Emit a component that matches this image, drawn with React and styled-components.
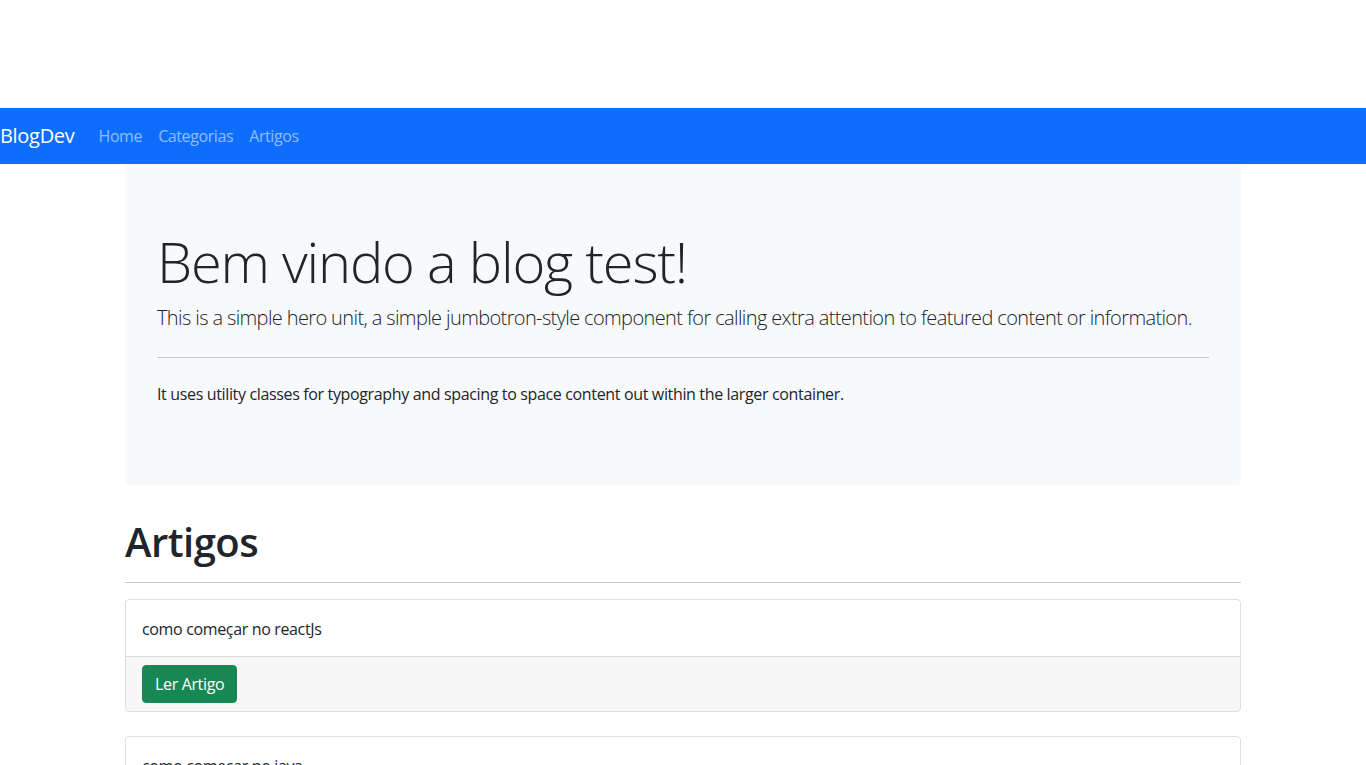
import styled, { createGlobalStyle } from "styled-components"

const GlobalStyle = createGlobalStyle`
    * { box-sizing: border-box; }
    body {
        margin: 0;
        background: #fff;
        color: #212529;
        font-family: "Open Sans", "Noto Sans", sans-serif;
        font-size: 16px;
        line-height: 1.5;
    }
`

const Page = styled.div`
    padding-top: 108px;
`

const Navbar = styled.nav`
    display: flex;
    align-items: center;
    height: 56px;
    background-color: #0d6efd;
`

const Brand = styled.a`
    color: #fff;
    font-size: 20px;
    margin-right: 16px;
    letter-spacing: -0.3px;
    text-decoration: none;
`

const NavLinks = styled.ul`
    display: flex;
    list-style: none;
    margin: 0;
    padding: 0;
`

const NavLink = styled.a`
    display: block;
    padding: 8px;
    color: rgba(255, 255, 255, 0.55);
    letter-spacing: -0.4px;
    text-decoration: none;
`

const Container = styled.main`
    max-width: 1140px;
    margin: 0 auto;
    padding: 0 12px;
`

const Jumbotron = styled.section`
    background-color: #f8f9fa;
    padding: 64px 32px;
    margin-bottom: 32px;
    border-radius: 0 0 6px 6px;
`

const Display = styled.h1`
    font-size: 56px;
    font-weight: 300;
    line-height: 1.2;
    letter-spacing: -1.2px;
    margin: 0 0 8px;
`

const Lead = styled.p`
    font-size: 20px;
    font-weight: 300;
    letter-spacing: -0.62px;
    white-space: nowrap;
    margin: 0 0 16px;
`

const Rule = styled.hr`
    border: 0;
    border-top: 1px solid ${(p) => p.$cor || "#c6c7c8"};
    margin: ${(p) => p.$margem || "24px 0"};
`

const Texto = styled.p`
    margin: 0 0 16px;
    letter-spacing: -0.35px;
`

const Titulo = styled.h1`
    font-size: 40px;
    font-weight: 600;
    line-height: 1.2;
    letter-spacing: -0.5px;
    margin: 0;
`

const Card = styled.article`
    border: 1px solid rgba(0, 0, 0, 0.125);
    border-radius: 4px;
    margin-bottom: 24px;
    overflow: hidden;
`

const CardBody = styled.div`
    padding: 17px 16px 15px;
    letter-spacing: -0.35px;
`

const CardFooter = styled.div`
    padding: 8px 16px;
    background-color: rgba(0, 0, 0, 0.03);
    border-top: 1px solid rgba(0, 0, 0, 0.125);
`

const Botao = styled.button`
    background-color: #198754;
    color: #fff;
    border: 1px solid #198754;
    border-radius: 4px;
    padding: 6px 12px;
    height: 38px;
    font-family: inherit;
    font-size: 16px;
    letter-spacing: -0.35px;
    cursor: pointer;
`

const artigos = ["como começar no reactJs", "como começar no java"]

export default function App() {
    return (
        <Page>
            <GlobalStyle />
            <Navbar>
                <Brand href="#">BlogDev</Brand>
                <NavLinks>
                    <li><NavLink href="#">Home</NavLink></li>
                    <li><NavLink href="#">Categorias</NavLink></li>
                    <li><NavLink href="#">Artigos</NavLink></li>
                </NavLinks>
            </Navbar>
            <Container>
                <Jumbotron>
                    <Display>Bem vindo a blog test!</Display>
                    <Lead>This is a simple hero unit, a simple jumbotron-style component for calling extra attention to featured content or information.</Lead>
                    <Rule />
                    <Texto>It uses utility classes for typography and spacing to space content out within the larger container.</Texto>
                </Jumbotron>
                <Titulo>Artigos</Titulo>
                <Rule $margem="16px 0" $cor="#c8c8c8" />
                {artigos.map((a) => (
                    <Card key={a}>
                        <CardBody>{a}</CardBody>
                        <CardFooter>
                            <Botao>Ler Artigo</Botao>
                        </CardFooter>
                    </Card>
                ))}
            </Container>
        </Page>
    )
}
